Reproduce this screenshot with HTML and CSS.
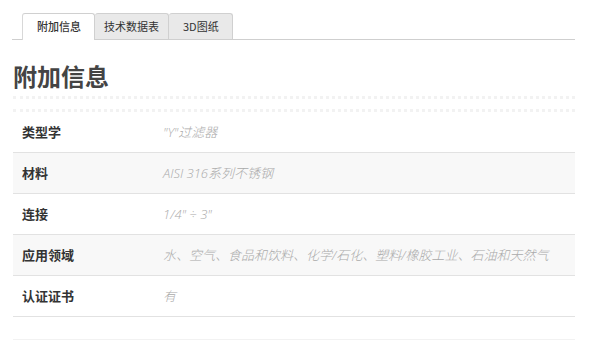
FILE: index.html
```html
<!DOCTYPE html>
<html lang="zh-CN">
<head>
    <meta charset="UTF-8">
    <meta name="viewport" content="width=device-width, initial-scale=1.0">
    <title>附加信息</title>
    <link rel="stylesheet" href="styles.css">
</head>
<body>
    <div class="panel">
        <ul class="tabs">
            <li class="tab active">附加信息</li>
            <li class="tab tab-wide">技术数据表</li>
            <li class="tab">3D图纸</li>
        </ul>

        <h2 class="title">附加信息</h2>
        <div class="divider"></div>

        <table class="attributes">
            <tr>
                <th>类型学</th>
                <td>"Y"过滤器</td>
            </tr>
            <tr class="alt">
                <th>材料</th>
                <td>AISI 316系列不锈钢</td>
            </tr>
            <tr>
                <th>连接</th>
                <td>1/4" ÷ 3"</td>
            </tr>
            <tr class="alt">
                <th>应用领域</th>
                <td>水、空气、食品和饮料、化学/石化、塑料/橡胶工业、石油和天然气</td>
            </tr>
            <tr>
                <th>认证证书</th>
                <td>有</td>
            </tr>
        </table>

        <div class="footer-line"></div>
    </div>
</body>
</html>
```

FILE: styles.css
```css
body {
    margin: 0;
    font-family: "Open Sans", "Noto Sans CJK SC", sans-serif;
    color: #333;
    background: #fff;
}
.panel {
    width: 562px;
    margin-left: 13px;
}
.tabs {
    list-style: none;
    margin: 13px 0 0 -1px;
    padding: 0 0 0 10px;
    display: flex;
    border-bottom: 1px solid #cfcfcf;
}
.tab {
    padding: 0 13px 0 14px;
    height: 25px;
    line-height: 25px;
    font-size: 11px;
    font-family: "Noto Sans CJK SC", sans-serif;
    color: #333;
    background: #e9e9e9;
    border: 1px solid #d0d0d0;
    border-bottom: none;
    border-left: none;
    border-radius: 3px 3px 0 0;
    margin-bottom: -1px;
}
.tab.active {
    background: #fff;
    border-left: 1px solid #d8d8d8;
    height: 26px;
    font-weight: 500;
}
.tab-wide {
    padding: 0 9px;
}
.title {
    margin: 21px 0 5px 0;
    font-family: "Noto Sans CJK SC", sans-serif;
    font-size: 24px;
    line-height: 30px;
    font-weight: bold;
    color: #444;
}
.divider {
    height: 10px;
    border-top: 3px dotted #f2f2f2;
    border-bottom: 3px dotted #f2f2f2;
}
.attributes {
    width: 100%;
    border-collapse: collapse;
}
.attributes tr {
    border-bottom: 1px solid #e2e2e2;
}
.attributes tr.alt {
    background: #f8f8f8;
}
.attributes th {
    width: 132px;
    padding: 12px 0 12px 9px;
    height: 16px;
    text-align: left;
    font-family: "Noto Sans CJK SC", sans-serif;
    font-size: 13px;
    line-height: 16px;
    font-weight: bold;
    color: #333;
}
.attributes td {
    padding: 12px 9px;
    font-size: 13px;
    line-height: 16px;
    font-style: italic;
    font-weight: 300;
    color: #aaa;
}
.footer-line {
    margin-top: 22px;
    border-top: 1px solid #f2f2f2;
}
```
